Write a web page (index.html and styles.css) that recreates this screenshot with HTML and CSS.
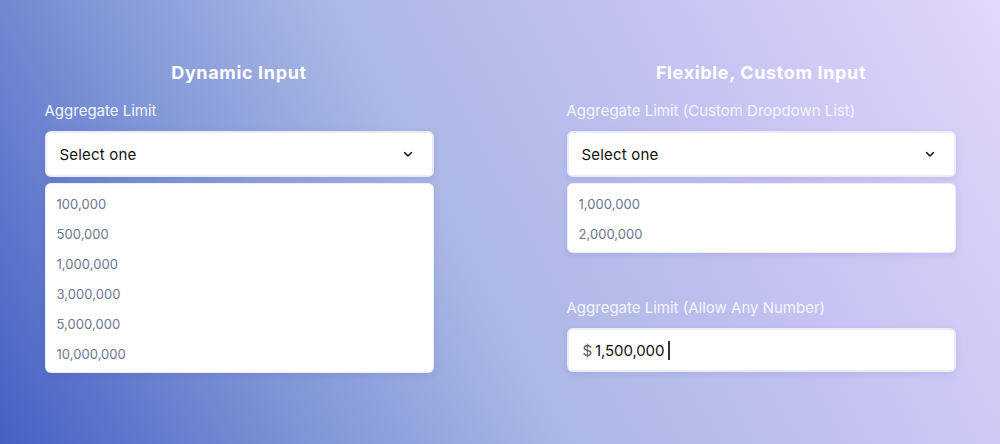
FILE: index.html
```html
<!DOCTYPE html>
<html lang="en">
<head>
<meta charset="utf-8">
<title>Aggregate Limit Inputs</title>
<link rel="stylesheet" href="styles.css">
</head>
<body>
<main class="page">
  <section class="col">
    <h2 class="title">Dynamic Input</h2>
    <div class="label">Aggregate Limit</div>
    <div class="select">
      <span>Select one</span>
      <svg class="chev" width="12" height="8" viewBox="0 0 12 8"><path d="M2.5 2.5l3.5 3.5 3.5-3.5" fill="none" stroke="#111" stroke-width="1.5" stroke-linecap="round" stroke-linejoin="round"/></svg>
    </div>
    <ul class="list list-long">
      <li>100,000</li>
      <li>500,000</li>
      <li>1,000,000</li>
      <li>3,000,000</li>
      <li>5,000,000</li>
      <li>10,000,000</li>
    </ul>
  </section>
  <section class="col">
    <h2 class="title">Flexible, Custom Input</h2>
    <div class="label">Aggregate Limit (Custom Dropdown List)</div>
    <div class="select">
      <span>Select one</span>
      <svg class="chev" width="12" height="8" viewBox="0 0 12 8"><path d="M2.5 2.5l3.5 3.5 3.5-3.5" fill="none" stroke="#111" stroke-width="1.5" stroke-linecap="round" stroke-linejoin="round"/></svg>
    </div>
    <ul class="list">
      <li>1,000,000</li>
      <li>2,000,000</li>
    </ul>
    <div class="label label-gap">Aggregate Limit (Allow Any Number)</div>
    <div class="input">
      <span class="cur">$</span><span class="val">1,500,000</span><span class="caret"></span>
    </div>
  </section>
</main>
</body>
</html>
```
FILE: styles.css
```css
* { box-sizing: border-box; }
html, body { margin: 0; padding: 0; }
body {
  width: 1000px;
  height: 444px;
  overflow: hidden;
  font-family: Inter, "Liberation Sans", sans-serif;
  background: linear-gradient(62deg, #4560c4 0%, #7f95d6 25%, #aab7e5 45%, #c3c2f0 70%, #e2d6fb 100%);
}
.page {
  display: flex;
  justify-content: center;
  gap: 133px;
  padding-top: 60px;
}
.col {
  width: 389px;
  display: flex;
  flex-direction: column;
}
.title {
  margin: 0;
  text-align: center;
  color: #fff;
  font-size: 18px;
  font-weight: 700;
  letter-spacing: 0.65px;
  line-height: 26px;
}
.label {
  margin-top: 15px;
  color: #f4f4ff;
  font-size: 15px;
  letter-spacing: 0;
  line-height: 20px;
}
.label-gap { margin-top: 45px; }
.select, .input {
  margin-top: 10px;
  height: 46px;
  background: #fff;
  border: 2px solid rgba(232, 232, 250, 0.85);
  border-radius: 6px;
  display: flex;
  align-items: center;
  padding: 0 18px 0 13px;
  box-shadow: 0 2px 6px rgba(60, 70, 140, 0.12);
}
.select { justify-content: space-between; color: #111; font-size: 15px; letter-spacing: 0.2px; }
.chev { display: block; }
.list {
  margin: 6px 0 0;
  padding: 10px 11px 8px;
  list-style: none;
  background: #fff;
  border-radius: 6px;
  border: 1px solid rgba(235, 235, 250, 0.9);
  box-shadow: 0 2px 6px rgba(60, 70, 140, 0.12);
}
.list li {
  height: 30px;
  line-height: 20px;
  color: #6c7591;
  font-size: 13px;
  letter-spacing: 0.05px;
}
.list li:last-child { height: 20px; }
.input {
  height: 44px;
  padding-left: 14px;
  font-size: 15px;
  letter-spacing: -0.1px;
}
.cur { color: #555a66; margin-right: 3px; }
.val { color: #111; }
.caret {
  display: inline-block;
  width: 1.5px;
  height: 19px;
  background: #333;
  margin-left: 4px;
}
```
